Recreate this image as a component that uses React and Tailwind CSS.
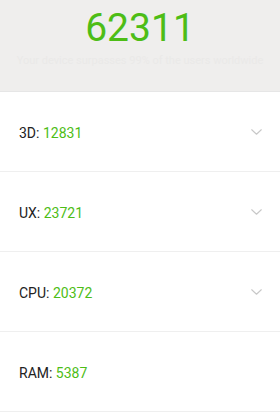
import React from 'react';

const rows = [
  { label: '3D', score: '12831', expandable: true },
  { label: 'UX', score: '23721', expandable: true },
  { label: 'CPU', score: '20372', expandable: true },
  { label: 'RAM', score: '5387', expandable: false },
];

const Chevron = () => (
  <svg width="11" height="6" viewBox="0 0 11 6" fill="none" className="block">
    <path d="M0.75 0.75l4.75 4.5 4.75-4.5" stroke="#c8c8c8" strokeWidth="1.1" strokeLinecap="round" strokeLinejoin="round" />
  </svg>
);

const ScoreRow = ({ label, score, expandable }) => (
  <div className="h-[80px] flex items-center justify-between pl-[19px] pr-[18px] border-b-[1.5px] border-[#efefef] bg-white">
    <span className="text-[14px] leading-[20px] text-[#222] pt-[2px]">
      {label}: <span className="text-[#4dbd16]">{score}</span>
    </span>
    {expandable && <Chevron />}
  </div>
);

const App = () => {
  return (
    <div className="w-[280px] h-[412px] overflow-hidden bg-white" style={{ fontFamily: 'Roboto, "Noto Sans", sans-serif' }}>
      {/* Total score header */}
      <div className="h-[92px] bg-[#efeeed] flex flex-col items-center border-b border-[#e6e6e6]">
        <div className="mt-[-9px] text-[11px] leading-[12px] text-[#d9d9d9]">
          Total <span className="text-[#4dbd16]">s</span>core
        </div>
        <div className="mt-[6px] text-[39px] leading-none text-[#4dbd16]">62311</div>
        <div className="mt-[6px] text-[11px] leading-[14px] text-[#eae9e8]">
          Your device surpasses 99% of the users worldwide
        </div>
      </div>

      {rows.map((r) => (
        <ScoreRow key={r.label} {...r} />
      ))}
    </div>
  );
};

export default App;
